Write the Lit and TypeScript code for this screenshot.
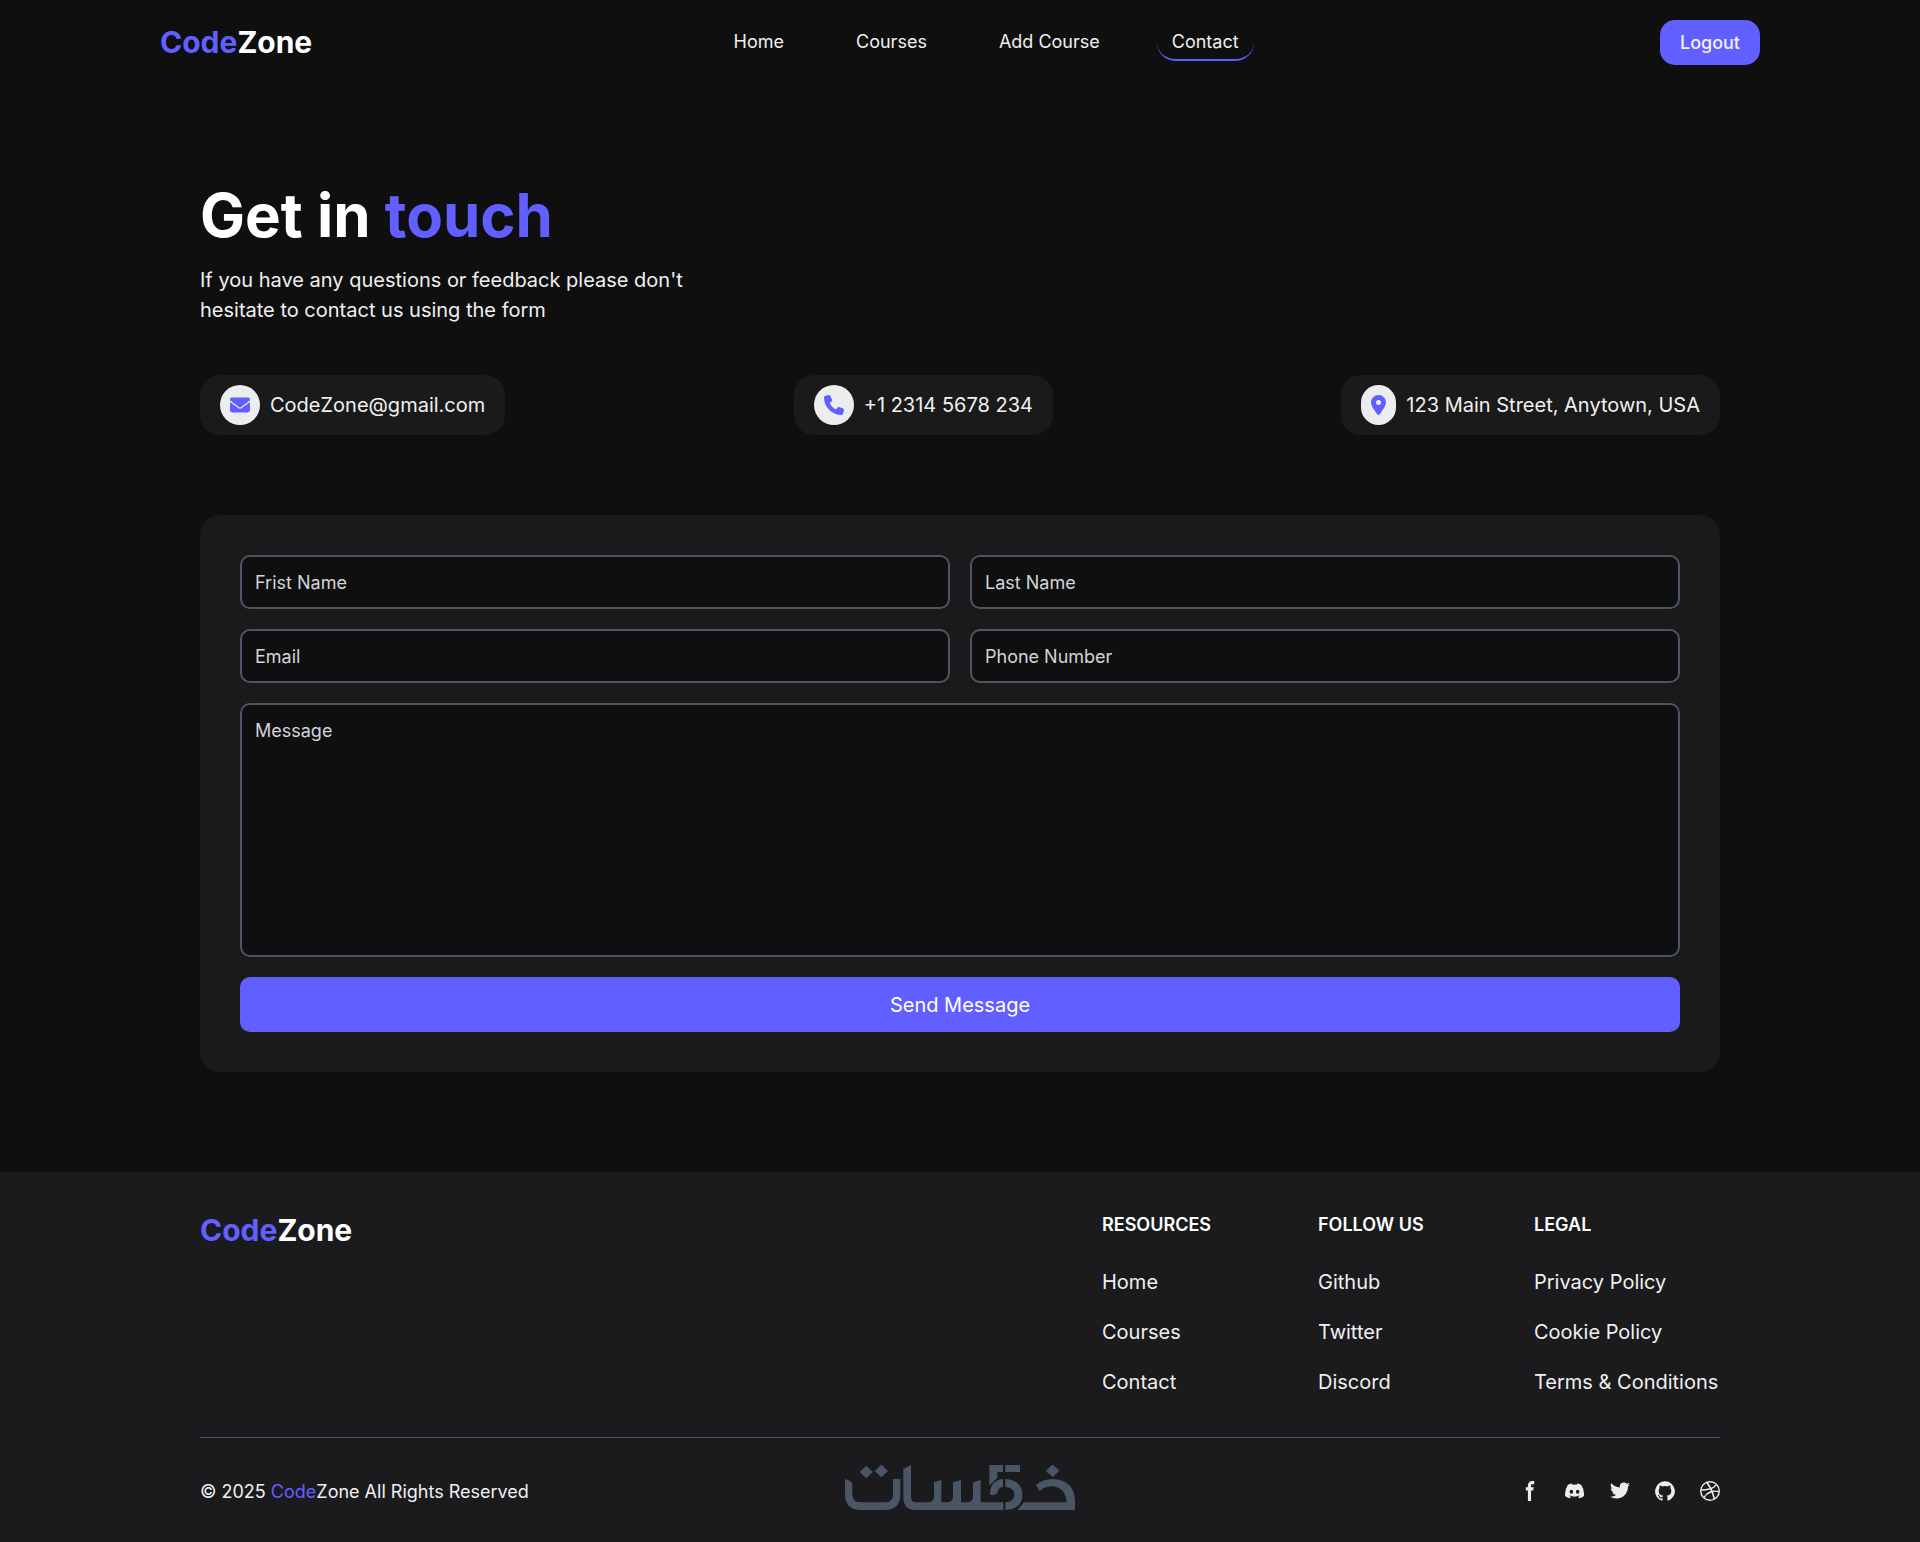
import { LitElement, html, css, svg } from "lit";
import { customElement } from "lit/decorators.js";
import { classMap } from "lit/directives/class-map.js";

const navLinks = [
  { label: "Home", active: false },
  { label: "Courses", active: false },
  { label: "Add Course", active: false },
  { label: "Contact", active: true },
];

const contacts = [
  {
    label: "CodeZone@gmail.com",
    href: "mailto:CodeZone@gmail.com",
    width: 512,
    path: "M48 64C21.5 64 0 85.5 0 112c0 15.1 7.1 29.3 19.2 38.4L236.8 313.6c11.4 8.5 27 8.5 38.4 0L492.8 150.4c12.1-9.1 19.2-23.3 19.2-38.4c0-26.5-21.5-48-48-48L48 64zM0 176L0 384c0 35.3 28.7 64 64 64l384 0c35.3 0 64-28.7 64-64l0-208L294.4 339.2c-22.8 17.1-54 17.1-76.8 0L0 176z",
  },
  {
    label: "+1 2314 5678 234",
    href: "tel:+123145678234",
    width: 512,
    path: "M164.9 24.6c-7.7-18.6-28-28.5-47.4-23.2l-88 24C12.1 30.2 0 46 0 64C0 311.4 200.6 512 448 512c18 0 33.8-12.1 38.6-29.5l24-88c5.3-19.4-4.6-39.7-23.2-47.4l-96-40c-16.3-6.8-35.2-2.1-46.3 11.6L304.7 368C234.3 334.7 177.3 277.7 144 207.3L193.3 167c13.7-11.2 18.4-30 11.6-46.3l-40-96z",
  },
  {
    label: "123 Main Street, Anytown, USA",
    href: "#map",
    width: 384,
    path: "M215.7 499.2C267 435 384 279.4 384 192C384 86 298 0 192 0S0 86 0 192c0 87.4 117 243 168.3 307.2c12.3 15.3 35.1 15.3 47.4 0zM192 128a64 64 0 1 1 0 128 64 64 0 1 1 0-128z",
  },
];

const fields = [
  { label: "Frist Name", type: "text", name: "first" },
  { label: "Last Name", type: "text", name: "last" },
  { label: "Email", type: "email", name: "email" },
  { label: "Phone Number", type: "tel", name: "phone" },
];

const footerColumns = [
  { title: "RESOURCES", links: ["Home", "Courses", "Contact"] },
  { title: "FOLLOW US", links: ["Github", "Twitter", "Discord"] },
  { title: "LEGAL", links: ["Privacy Policy", "Cookie Policy", "Terms & Conditions"] },
];

const socials = [
  {
    label: "Facebook",
    box: "0 0 8 19",
    path: "M6.135 3H8V0H6.135a4.147 4.147 0 0 0-4.142 4.142V6H0v3h2v9.938h3V9h2.021l.592-3H5V3.591A.6.6 0 0 1 5.592 3h.543Z",
  },
  {
    label: "Discord",
    box: "0 0 21 16",
    path: "M16.942 1.556a16.3 16.3 0 0 0-4.126-1.3 12.04 12.04 0 0 0-.529 1.1 15.175 15.175 0 0 0-4.573 0 11.585 11.585 0 0 0-.535-1.1 16.274 16.274 0 0 0-4.129 1.3A17.392 17.392 0 0 0 .182 13.218a15.785 15.785 0 0 0 4.963 2.521c.41-.564.773-1.16 1.084-1.785a10.63 10.63 0 0 1-1.706-.83c.143-.106.283-.217.418-.33a11.664 11.664 0 0 0 10.118 0c.137.113.277.224.418.33-.544.328-1.116.606-1.71.832a12.52 12.52 0 0 0 1.084 1.785 16.46 16.46 0 0 0 5.064-2.595 17.286 17.286 0 0 0-2.973-11.59ZM6.678 10.813a1.941 1.941 0 0 1-1.8-2.045 1.93 1.93 0 0 1 1.8-2.047 1.919 1.919 0 0 1 1.8 2.047 1.93 1.93 0 0 1-1.8 2.045Zm6.644 0a1.94 1.94 0 0 1-1.8-2.045 1.93 1.93 0 0 1 1.8-2.047 1.918 1.918 0 0 1 1.8 2.047 1.93 1.93 0 0 1-1.8 2.045Z",
  },
  {
    label: "Twitter",
    box: "0 0 20 17",
    path: "M20 1.892a8.178 8.178 0 0 1-2.355.635 4.074 4.074 0 0 0 1.8-2.235 8.344 8.344 0 0 1-2.605.98A4.13 4.13 0 0 0 13.85 0a4.068 4.068 0 0 0-4.1 4.038 4 4 0 0 0 .105.919A11.705 11.705 0 0 1 1.4.734a4.006 4.006 0 0 0 1.268 5.392 4.165 4.165 0 0 1-1.859-.5v.05A4.057 4.057 0 0 0 4.1 9.635a4.19 4.19 0 0 1-1.856.07 4.108 4.108 0 0 0 3.831 2.807A8.36 8.36 0 0 1 0 14.184 11.732 11.732 0 0 0 6.291 16 11.502 11.502 0 0 0 17.964 4.5c0-.177 0-.35-.012-.523A8.143 8.143 0 0 0 20 1.892Z",
  },
  {
    label: "GitHub",
    box: "0 0 20 20",
    path: "M10 .333A9.911 9.911 0 0 0 6.866 19.65c.5.092.678-.215.678-.477 0-.237-.01-1.017-.014-1.845-2.757.6-3.338-1.169-3.338-1.169a2.627 2.627 0 0 0-1.1-1.451c-.9-.615.07-.6.07-.6a2.084 2.084 0 0 1 1.518 1.021 2.11 2.11 0 0 0 2.884.823c.044-.503.268-.973.63-1.325-2.2-.25-4.516-1.1-4.516-4.9A3.832 3.832 0 0 1 4.7 7.068a3.56 3.56 0 0 1 .095-2.623s.832-.266 2.726 1.016a9.409 9.409 0 0 1 4.962 0c1.89-1.282 2.717-1.016 2.717-1.016.366.83.402 1.768.1 2.623a3.827 3.827 0 0 1 1.02 2.659c0 3.807-2.319 4.644-4.525 4.889a2.366 2.366 0 0 1 .673 1.834c0 1.326-.012 2.394-.012 2.72 0 .263.18.572.681.475A9.911 9.911 0 0 0 10 .333Z",
  },
  {
    label: "Dribbble",
    box: "0 0 20 20",
    path: "M10 0a10 10 0 1 0 10 10A10.009 10.009 0 0 0 10 0Zm6.613 4.614a8.523 8.523 0 0 1 1.93 5.32 20.094 20.094 0 0 0-5.949-.274c-.059-.149-.122-.292-.184-.441a23.879 23.879 0 0 0-.566-1.239 11.41 11.41 0 0 0 4.769-3.366ZM8 1.707a8.821 8.821 0 0 1 2-.238 8.5 8.5 0 0 1 5.664 2.152 9.608 9.608 0 0 1-4.476 3.087A45.758 45.758 0 0 0 8 1.707ZM1.642 8.262a8.57 8.57 0 0 1 4.73-5.981A53.998 53.998 0 0 1 9.54 7.222a32.078 32.078 0 0 1-7.9 1.04h.002Zm2.01 7.46a8.51 8.51 0 0 1-2.2-5.707v-.262a31.64 31.64 0 0 0 8.777-1.219c.243.477.477.964.692 1.449-.114.032-.227.067-.336.1a13.569 13.569 0 0 0-6.942 5.636l.009.003ZM10 18.556a8.508 8.508 0 0 1-5.243-1.8 11.717 11.717 0 0 1 6.7-5.332.509.509 0 0 1 .055-.02 35.65 35.65 0 0 1 1.819 6.476 8.476 8.476 0 0 1-3.331.676Zm4.772-1.462A37.232 37.232 0 0 0 13.113 11a12.513 12.513 0 0 1 5.321.364 8.56 8.56 0 0 1-3.66 5.73h-.002Z",
  },
];

// Partner mark: three diamonds, a cup, a toothed band, a split "5" and a hook.
const partnerMark = svg`
  <path d="M109 47L129 66L109 85L89 66Z M154 44L174 63L154 82L134 63Z M668 43L688 62L668 81L648 62Z" />
  <path d="M45 87Q58 90 67 99V134Q68 157 92 157H167Q189 156 189 134V87H211V132Q211 180 163 180H93Q45 180 45 132Z" />
  <path d="M220 57L243 45V142Q243 157 258 157H294Q312 157 312 139V97L334 90V157H351Q369 157 369 139V97L393 90V157H411Q429 157 429 139V97L452 90V157H520V180H256Q220 180 220 142Z" />
  <path d="M478 45H519V66H502V83L478 107Z M526 45H570V66H526Z" />
  <path d="M519 87V110Q504 113 502 128Q496 138 480 134Q479 92 519 87Z" />
  <path d="M526 87Q577 91 577 134Q577 177 526 180V157Q553 155 553 134Q553 113 526 110Z" />
  <path d="M618 105Q638 87 667 87Q733 90 735 152V180H562L582 157H710Q706 112 667 109Q643 109 629 123Z" />
`;

const base = css`
  *,
  *::before,
  *::after {
    box-sizing: border-box;
  }
  a {
    color: inherit;
    text-decoration: none;
  }
  .logo {
    font-size: 30px;
    line-height: 37px;
    font-weight: 700;
    color: #ffffff;
  }
  .accent {
    color: #615fff;
  }
`;

@customElement("site-header")
class SiteHeader extends LitElement {
  static styles = [
    base,
    css`
      :host {
        display: block;
      }
      .bar {
        display: flex;
        align-items: center;
        justify-content: space-between;
        max-width: 1600px;
        margin: 0 auto;
        padding: 20px 0;
      }
      .nav {
        display: flex;
        gap: 42px;
      }
      .link {
        padding: 4px 15px;
        border-bottom: 2px solid transparent;
        border-radius: 20px;
      }
      .active {
        border-bottom-color: #615fff;
      }
      .logout {
        height: 45px;
        padding: 0 20px;
        border: 0;
        border-radius: 15px;
        background: #615fff;
        color: inherit;
        font: inherit;
        font-weight: 500;
      }
    `,
  ];

  render() {
    return html`
      <header class="bar">
        <a class="logo" href="#"><span class="accent">Code</span>Zone</a>
        <nav class="nav">
          ${navLinks.map(
            (l) => html`<a href="#" class=${classMap({ link: true, active: l.active })}>${l.label}</a>`
          )}
        </nav>
        <button class="logout" type="button">Logout</button>
      </header>
    `;
  }
}

@customElement("contact-page")
class ContactPage extends LitElement {
  static styles = [
    base,
    css`
      :host {
        display: block;
      }
      .page {
        max-width: 1600px;
        margin: 0 auto;
        padding: 100px 40px;
      }
      .title {
        margin: 0 0 20px;
        font-size: 60px;
        line-height: 60px;
        font-weight: 700;
        color: #ffffff;
      }
      .intro {
        max-width: 500px;
        margin: 0 0 50px;
        font-size: 20px;
        line-height: 30px;
      }
      .cards {
        display: flex;
        flex-wrap: wrap;
        justify-content: space-between;
        gap: 20px;
        margin-bottom: 80px;
      }
      .card {
        display: flex;
        align-items: center;
        gap: 10px;
        padding: 10px 20px;
        border-radius: 20px;
        background: #1a1a1a;
        font-size: 20px;
        line-height: 30px;
      }
      .badge {
        display: flex;
        padding: 10px;
        border-radius: 20px;
        background: #ebedef;
      }
      .icon {
        display: block;
        height: 20px;
        fill: #615fff;
      }
      .form {
        display: grid;
        grid-template-columns: 1fr 1fr;
        gap: 20px;
        padding: 40px;
        border-radius: 20px;
        background: #1a1a1a;
      }
      .field {
        display: block;
        width: 100%;
        min-width: 0;
        height: 54px;
        padding: 13px;
        border: 2px solid #4a5565;
        border-radius: 10px;
        outline: none;
        background: #0f0f0f;
        color: #f0f0f0;
        font: inherit;
        line-height: 26px;
      }
      .field::placeholder {
        color: #d1d5dc;
        opacity: 1;
      }
      .message {
        grid-column: 1 / -1;
        height: 254px;
        resize: none;
      }
      .send {
        grid-column: 1 / -1;
        height: 55px;
        border: 0;
        border-radius: 10px;
        background: #615fff;
        color: #ffffff;
        font: inherit;
        font-size: 20px;
        line-height: 30px;
      }
    `,
  ];

  render() {
    return html`
      <main class="page">
        <h1 class="title">Get in <span class="accent">touch</span></h1>
        <p class="intro">
          If you have any questions or feedback please don't hesitate to contact us using the form
        </p>
        <div class="cards">
          ${contacts.map(
            (c) => html`
              <a class="card" href=${c.href}>
                <span class="badge">
                  <svg class="icon" viewBox="0 0 ${c.width} 512" aria-hidden="true"><path d=${c.path} /></svg>
                </span>
                <span>${c.label}</span>
              </a>
            `
          )}
        </div>
        <form class="form">
          ${fields.map(
            (f) => html`<input
              class="field"
              type=${f.type}
              name=${f.name}
              placeholder=${f.label}
              aria-label=${f.label}
            />`
          )}
          <textarea class="field message" name="message" placeholder="Message" aria-label="Message"></textarea>
          <button class="send" type="button">Send Message</button>
        </form>
      </main>
    `;
  }
}

@customElement("site-footer")
class SiteFooter extends LitElement {
  static styles = [
    base,
    css`
      :host {
        display: block;
        background: #1b1b1d;
      }
      .inner {
        max-width: 1600px;
        margin: 0 auto;
        padding: 40px 40px 0;
      }
      .top {
        display: flex;
        align-items: flex-start;
        justify-content: space-between;
        padding-bottom: 40px;
        border-bottom: 1px solid #4a5565;
      }
      .columns {
        display: grid;
        grid-template-columns: repeat(3, minmax(186px, 1fr));
        gap: 30px;
      }
      .heading {
        margin: 0 0 30px;
        font-size: 18px;
        line-height: 25px;
        font-weight: 600;
        color: #ffffff;
      }
      .list {
        display: grid;
        gap: 20px;
        margin: 0;
        padding: 0;
        list-style: none;
        font-size: 20px;
        line-height: 30px;
        white-space: nowrap;
      }
      .bottom {
        display: grid;
        grid-template-columns: 1fr auto 1fr;
        align-items: center;
        padding: 27px 0 25px;
      }
      .partner {
        display: block;
        width: 230px;
        height: 52px;
        fill: #4a5565;
      }
      .socials {
        display: flex;
        justify-content: flex-end;
        gap: 25px;
      }
      .social {
        display: block;
        width: 20px;
        height: 20px;
        fill: #ebedef;
      }
    `,
  ];

  render() {
    return html`
      <footer class="inner">
        <div class="top">
          <a class="logo" href="#"><span class="accent">Code</span>Zone</a>
          <div class="columns">
            ${footerColumns.map(
              (col) => html`
                <section>
                  <h2 class="heading">${col.title}</h2>
                  <ul class="list">
                    ${col.links.map((l) => html`<li><a href="#">${l}</a></li>`)}
                  </ul>
                </section>
              `
            )}
          </div>
        </div>
        <div class="bottom">
          <span>© 2025 <span class="accent">Code</span>Zone All Rights Reserved</span>
          <a href="#" aria-label="خمسات">
            <svg class="partner" viewBox="45 45 690 156" aria-hidden="true">${partnerMark}</svg>
          </a>
          <div class="socials">
            ${socials.map(
              (s) => html`
                <a href="#" aria-label=${s.label}>
                  <svg class="social" viewBox=${s.box} aria-hidden="true">
                    <path fill-rule="evenodd" clip-rule="evenodd" d=${s.path} />
                  </svg>
                </a>
              `
            )}
          </div>
        </div>
      </footer>
    `;
  }
}

@customElement("app-root")
class AppRoot extends LitElement {
  static styles = css`
    :host {
      display: block;
      min-height: 100vh;
      background: #0f0f0f;
      color: #f0f0f0;
      font-family: Inter, "Liberation Sans", sans-serif;
      font-size: 18px;
      line-height: 27px;
    }
  `;

  render() {
    return html`
      <site-header></site-header>
      <contact-page></contact-page>
      <site-footer></site-footer>
    `;
  }
}
